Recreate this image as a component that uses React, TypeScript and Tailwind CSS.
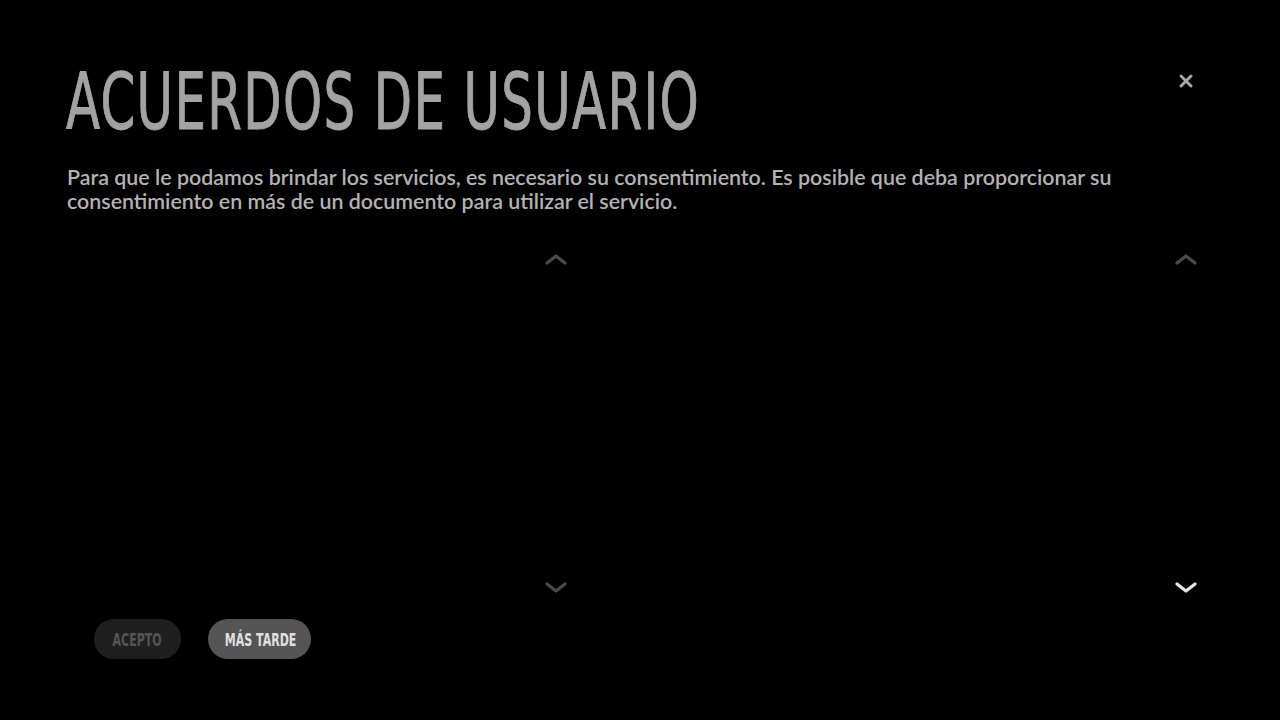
import React from 'react'

function Chevron({ dir, className }: { dir: 'up' | 'down'; className: string }): React.JSX.Element {
  return (
    <svg width="22" height="12" viewBox="0 0 22 12" className={className}>
      {dir === 'up' ? (
        <path d="M2 10 L11 3 L20 10" fill="none" stroke="currentColor" strokeWidth="3.2" strokeLinecap="round" strokeLinejoin="round" />
      ) : (
        <path d="M2 2 L11 9 L20 2" fill="none" stroke="currentColor" strokeWidth="3.2" strokeLinecap="round" strokeLinejoin="round" />
      )}
    </svg>
  )
}

const condensed = { fontFamily: '"DejaVu Sans Condensed", "DejaVu Sans", sans-serif' }

function Label({ children }: { children: React.ReactNode }): React.JSX.Element {
  return (
    <span className="inline-block whitespace-nowrap" style={{ transform: 'scaleX(0.68)' }}>
      {children}
    </span>
  )
}

export default function App(): React.JSX.Element {
  return (
    <div className="h-[720px] w-[1280px] overflow-hidden bg-black" style={{ fontFamily: 'Lato, "Noto Sans", sans-serif' }}>
      <div className="flex items-start justify-between pl-[66px] pr-[86px] pt-[58px]">
        <h1
          className="whitespace-nowrap text-[79px] leading-[88px] tracking-[2px] text-[#a3a3a3]"
          style={{ ...condensed, transform: 'scaleX(0.7)', transformOrigin: 'left', WebkitTextStroke: '1px #a3a3a3' }}
        >
          ACUERDOS DE USUARIO
        </h1>
        <button className="mt-[15px] text-[#a8a8a8]" aria-label="Cerrar">
          <svg width="16" height="16" viewBox="0 0 16 16">
            <path d="M3 3 L13 13 M13 3 L3 13" stroke="currentColor" strokeWidth="3" strokeLinecap="round" />
          </svg>
        </button>
      </div>
      <p className="mt-[19px] w-[1130px] pl-[67px] text-[21.4px] font-semibold leading-[24px] text-[#b3b3b3]">
        Para que le podamos brindar los servicios, es necesario su consentimiento. Es posible que deba proporcionar su consentimiento en más de un documento para utilizar el servicio.
      </p>
      <div className="mt-[40px] flex h-[341px] pl-[67px]">
        <div className="flex w-[500px] flex-col items-end justify-between">
          <Chevron dir="up" className="text-[#4a4a4a]" />
          <Chevron dir="down" className="text-[#4a4a4a]" />
        </div>
        <div className="flex w-[630px] flex-col items-end justify-between">
          <Chevron dir="up" className="text-[#4a4a4a]" />
          <Chevron dir="down" className="text-[#e6e6e6]" />
        </div>
      </div>
      <div className="mt-[25px] flex gap-[27px] pl-[94px]" style={condensed}>
        <button className="h-[40px] w-[87px] whitespace-nowrap rounded-full bg-[#1f1f1f] text-[18px] font-bold text-[#555555]">
          <Label>ACEPTO</Label>
        </button>
        <button className="h-[40px] w-[103px] whitespace-nowrap rounded-full bg-[#555555] text-[18px] font-bold text-[#e0e0e0]">
          <Label>MÁS TARDE</Label>
        </button>
      </div>
    </div>
  )
}
